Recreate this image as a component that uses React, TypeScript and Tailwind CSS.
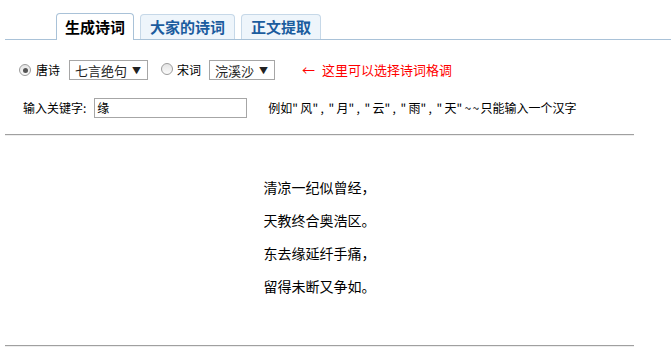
import React from "react";

const font = { fontFamily: '"Noto Sans CJK SC", "Noto Sans", sans-serif' };

function Radio({ checked }: { checked?: boolean }) {
  return (
    <span className="relative inline-flex h-[12px] w-[12px] items-center justify-center rounded-full border border-[#9c9c9c] bg-gradient-to-b from-[#e4e4e4] to-[#fbfbfb]">
      {checked && <span className="h-[5px] w-[5px] rounded-full bg-[#555]" />}
    </span>
  );
}

function Select({ label, width }: { label: string; width: string }) {
  return (
    <div
      className={`flex h-[20px] items-center justify-between border border-[#a6a6a6] bg-white pl-[5px] pr-[6px] text-[13px] text-[#222] ${width}`}
    >
      <span className="leading-none">{label}</span>
      <span className="text-[9px] leading-none">▼</span>
    </div>
  );
}

function Sym({ c }: { c: string }) {
  return <span className="inline-block w-[8px] text-left">{c}</span>;
}

export default function App() {
  const poem = ["清凉一纪似曾经，", "天教终合奥浩区。", "东去缘延纤手痛，", "留得未断又争如。"];
  const words = ["风", "月", "云", "雨", "天"];
  return (
    <div className="h-[349px] w-[671px] overflow-hidden bg-white text-[12px] text-black" style={font}>
      {/* tabs */}
      <div className="ml-[5px] flex items-end gap-[6px] border-b border-[#a9c2d8] pl-[51px] pt-[13px]">
        <div className="-mb-px flex h-[27px] w-[78px] items-center justify-center rounded-t-[4px] border border-b-0 border-[#a9c2d8] bg-white text-[15px] font-bold text-black">
          生成诗词
        </div>
        <div className="flex h-[25px] w-[95px] items-center justify-center rounded-t-[4px] border border-b-0 border-[#c6d8e8] bg-[#eef5fb] text-[15px] font-bold text-[#1b5c9e]">
          大家的诗词
        </div>
        <div className="flex h-[25px] w-[80px] items-center justify-center rounded-t-[4px] border border-b-0 border-[#c6d8e8] bg-[#eef5fb] text-[15px] font-bold text-[#1b5c9e]">
          正文提取
        </div>
      </div>

      {/* row 1 */}
      <div className="mt-[20px] flex h-[20px] items-center pl-[19px]">
        <Radio checked />
        <span className="ml-[5px] text-[12px]">唐诗</span>
        <div className="ml-[9px]">
          <Select label="七言绝句" width="w-[79px]" />
        </div>
        <span className="ml-[13px]">
          <Radio />
        </span>
        <span className="ml-[4px] text-[12px]">宋词</span>
        <div className="ml-[8px]">
          <Select label="浣溪沙" width="w-[66px]" />
        </div>
        <span className="ml-[27px] text-[13px] text-[#ff0000]">←</span>
        <span className="ml-[7px] text-[13px] text-[#ff0000]">这里可以选择诗词格调</span>
      </div>

      {/* row 2 */}
      <div className="mt-[18px] flex h-[20px] items-center pl-[23px]">
        <span className="text-[12px]">输入关键字:</span>
        <div className="ml-[8px] flex h-[20px] w-[153px] items-center border border-[#a6a6a6] bg-white pl-[2px] text-[12px]">
          缘
        </div>
        <span className="ml-[21px] whitespace-nowrap text-[12px]">
          例如
          {words.map((w, i) => (
            <React.Fragment key={w}>
              <Sym c={'"'} />
              {w}
              <Sym c={'"'} />
              {i < words.length - 1 && <Sym c="," />}
            </React.Fragment>
          ))}
          <Sym c="~" />
          <Sym c="~" />
          只能输入一个汉字
        </span>
      </div>

      {/* hr */}
      <div className="ml-[5px] mt-[16px] w-[629px] border-b border-t border-b-[#eeeeee] border-t-[#a0a0a0]" />

      {/* poem */}
      <div className="ml-[5px] mt-[35px] flex w-[629px] flex-col items-center text-[14px] leading-[33px]">
        {poem.map((l) => (
          <div key={l}>{l}</div>
        ))}
      </div>

      {/* bottom hr */}
      <div className="ml-[5px] mt-[42px] w-[629px] border-b border-t border-b-[#eeeeee] border-t-[#a0a0a0]" />
    </div>
  );
}
